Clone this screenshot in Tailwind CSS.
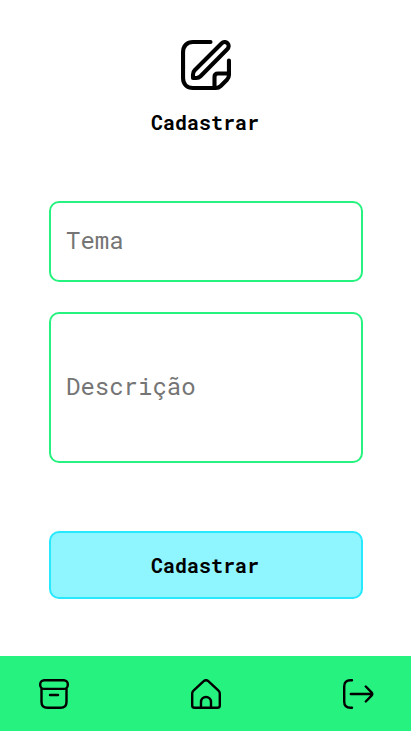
<!DOCTYPE html>
<html lang="pt-BR">
<head>
<meta charset="utf-8">
<meta name="viewport" content="width=device-width, initial-scale=1">
<title>Cadastrar</title>
<script src="https://cdn.jsdelivr.net/npm/@tailwindcss/browser@4"></script>
</head>
<body class="bg-white">
<div class="flex h-[731px] w-[411px] flex-col overflow-hidden bg-white font-['Roboto_Mono','DejaVu_Sans_Mono',monospace] text-black">
  <header class="flex flex-col items-center pt-10">
    <svg class="h-[50px] w-[50px]" viewBox="0 0 50 50" fill="none" stroke="currentColor" stroke-width="4.100" stroke-linecap="round" stroke-linejoin="round">
      <path d="M29.500 2.050H12C6 2.050 2.050 6 2.050 12v26c0 6 3.950 9.950 9.950 9.950h23c2 0 3.300-.6 4.700-2l6.250-6.250c1.400-1.400 2-2.700 2-4.700V20.500"/>
      <path d="M33.500 47V37c0-2.200 1.300-3.500 3.500-3.500h10"/>
      <path d="M12 38v-3.500c0-1.800.5-3 1.700-4.200L40.500 3.500c1.800-1.800 4.300-2 6-.3s1.500 4.300-.3 6.100L19.500 36.300C18.300 37.500 17 38 15.300 38Z"/>
    </svg>
    <h1 class="mt-[18px] mb-px pr-px text-[20px] leading-7 font-bold">Cadastrar</h1>
  </header>
  <form class="mt-16 flex flex-col pr-12 pl-[49px]">
    <input type="text" placeholder="Tema" aria-label="Tema" class="h-[81px] w-[314px] rounded-[10px] border-2 border-[#26f27f] px-[15px] pb-1 text-2xl placeholder:text-[#757575]">
    <input type="text" placeholder="Descrição" aria-label="Descrição" class="mt-[30px] h-[151px] w-[314px] rounded-[10px] border-2 border-[#26f27f] px-[15px] pb-1 text-2xl placeholder:text-[#757575]">
    <button type="button" class="mt-[68px] h-[68px] w-[314px] rounded-[10px] border-2 border-[#26e9ff] bg-[#8ff5ff] pr-0.5 text-[20px] font-bold">Cadastrar</button>
  </form>
  <nav class="mt-auto flex h-[75px] items-center justify-between bg-[#26f27f] pr-[37px] pl-[39px]">
    <svg class="h-[30px] w-[30px]" viewBox="0 0 30 30" fill="none" stroke="currentColor" stroke-width="2.400" stroke-linecap="round" stroke-linejoin="round">
      <rect x="1.200" y="1.200" width="27.600" height="8.700" rx="4"/>
      <path d="M2.500 10v13c0 4 2 5.800 6 5.800h13c4 0 6-1.800 6-5.800V10M11 16h8"/>
    </svg>
    <svg class="h-[30px] w-[30px]" viewBox="0 0 30 30" fill="none" stroke="currentColor" stroke-width="2.400" stroke-linecap="round" stroke-linejoin="round">
      <path d="M1.200 14.500c0-1.200.4-2 1.300-2.800L12.700 2.200c1.500-1.400 3.100-1.400 4.600 0l10.200 9.500c.9.800 1.300 1.600 1.300 2.800v12c0 1.600-.8 2.300-2.400 2.300H3.600c-1.600 0-2.400-.7-2.400-2.300Z"/>
      <path d="M10 28.500V23a5 5 0 0 1 10 0v5.500"/>
    </svg>
    <svg class="h-[30px] w-[31px]" viewBox="0 0 31 30" fill="none" stroke="currentColor" stroke-width="2.400" stroke-linecap="round" stroke-linejoin="round">
      <path d="M9 1.200H7.500C3.500 1.200 1.200 3.500 1.200 7.500v15c0 4 2.300 6.300 6.300 6.300H9M7.800 15H28.500M22.800 7.500l5.700 5.900c1 1.100 1 2.100 0 3.200l-5.700 5.900"/>
    </svg>
  </nav>
</div>
</body>
</html>
